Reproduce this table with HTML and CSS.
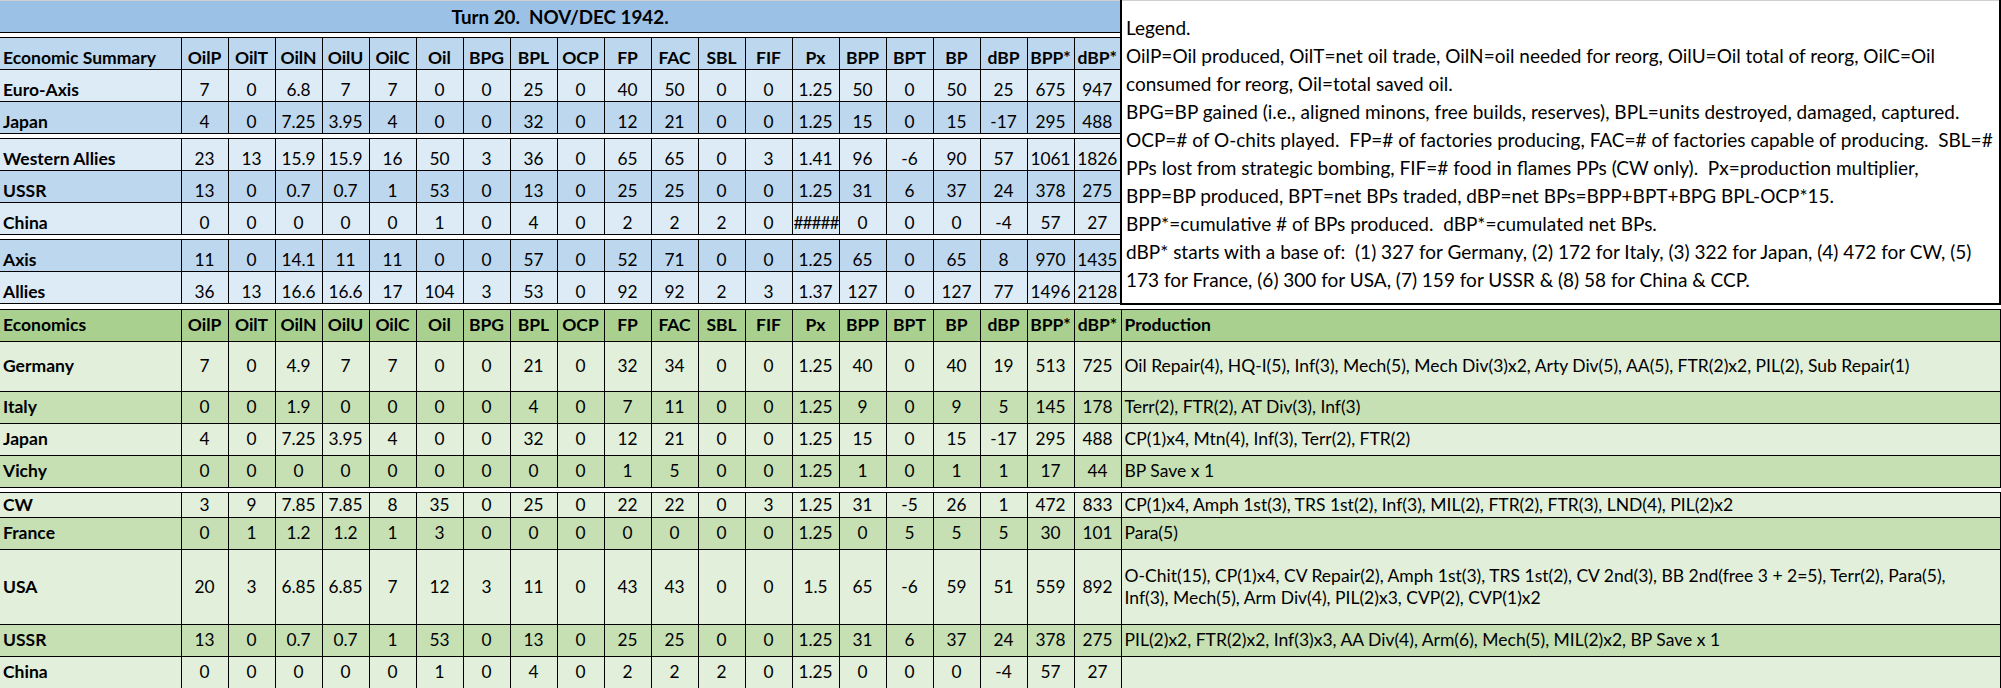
FILE: index.html
```html
<!DOCTYPE html>
<html>
<head>
<meta charset="utf-8">
<link rel="stylesheet" href="styles.css">
</head>
<body>
<table class="sheet">
<colgroup>
<col class="c-name">
<col class="c-num"><col class="c-num"><col class="c-num"><col class="c-num"><col class="c-num">
<col class="c-num"><col class="c-num"><col class="c-num"><col class="c-num"><col class="c-num">
<col class="c-num"><col class="c-num"><col class="c-num"><col class="c-num"><col class="c-num">
<col class="c-num"><col class="c-num"><col class="c-num"><col class="c-num"><col class="c-num">
<col class="c-prod">
</colgroup>
<tbody>
<tr class="r-title"><td colspan="21" class="title">Turn 20.&nbsp; NOV/DEC 1942.</td>
<td rowspan="12" class="legend">
<div class="legend-lines">
<div>Legend.</div>
<div>OilP=Oil produced, OilT=net oil trade, OilN=oil needed for reorg, OilU=Oil total of reorg, OilC=Oil</div>
<div>consumed for reorg, Oil=total saved oil.</div>
<div>BPG=BP gained (i.e., aligned minons, free builds, reserves), BPL=units destroyed, damaged, captured.</div>
<div>OCP=# of O-chits played.&nbsp; FP=# of factories producing, FAC=# of factories capable of producing.&nbsp; SBL=#</div>
<div>PPs lost from strategic bombing, FIF=# food in flames PPs (CW only).&nbsp; Px=production multiplier,</div>
<div>BPP=BP produced, BPT=net BPs traded, dBP=net BPs=BPP+BPT+BPG BPL-OCP*15.</div>
<div>BPP*=cumulative # of BPs produced.&nbsp; dBP*=cumulated net BPs.</div>
<div>dBP* starts with a base of:&nbsp; (1) 327 for Germany, (2) 172 for Italy, (3) 322 for Japan, (4) 472 for CW, (5)</div>
<div>173 for France, (6) 300 for USA, (7) 159 for USSR &amp; (8) 58 for China &amp; CCP.</div>
</div>
</td></tr>
<tr class="gap"><td colspan="21"></td></tr>
<tr class="r-std sum b-dark hdr"><td class="name">Economic Summary</td><td>OilP</td><td>OilT</td><td>OilN</td><td>OilU</td><td>OilC</td><td>Oil</td><td>BPG</td><td>BPL</td><td>OCP</td><td>FP</td><td>FAC</td><td>SBL</td><td>FIF</td><td>Px</td><td>BPP</td><td>BPT</td><td>BP</td><td>dBP</td><td>BPP*</td><td>dBP*</td></tr>
<tr class="r-std sum b-light"><td class="name">Euro-Axis</td><td>7</td><td>0</td><td>6.8</td><td>7</td><td>7</td><td>0</td><td>0</td><td>25</td><td>0</td><td>40</td><td>50</td><td>0</td><td>0</td><td>1.25</td><td>50</td><td>0</td><td>50</td><td>25</td><td>675</td><td>947</td></tr>
<tr class="r-std sum b-dark"><td class="name">Japan</td><td>4</td><td>0</td><td>7.25</td><td>3.95</td><td>4</td><td>0</td><td>0</td><td>32</td><td>0</td><td>12</td><td>21</td><td>0</td><td>0</td><td>1.25</td><td>15</td><td>0</td><td>15</td><td>-17</td><td>295</td><td>488</td></tr>
<tr class="gap"><td colspan="21"></td></tr>
<tr class="r-std sum b-light"><td class="name">Western Allies</td><td>23</td><td>13</td><td>15.9</td><td>15.9</td><td>16</td><td>50</td><td>3</td><td>36</td><td>0</td><td>65</td><td>65</td><td>0</td><td>3</td><td>1.41</td><td>96</td><td>-6</td><td>90</td><td>57</td><td>1061</td><td>1826</td></tr>
<tr class="r-std sum b-dark"><td class="name">USSR</td><td>13</td><td>0</td><td>0.7</td><td>0.7</td><td>1</td><td>53</td><td>0</td><td>13</td><td>0</td><td>25</td><td>25</td><td>0</td><td>0</td><td>1.25</td><td>31</td><td>6</td><td>37</td><td>24</td><td>378</td><td>275</td></tr>
<tr class="r-std sum b-light"><td class="name">China</td><td>0</td><td>0</td><td>0</td><td>0</td><td>0</td><td>1</td><td>0</td><td>4</td><td>0</td><td>2</td><td>2</td><td>2</td><td>0</td><td class="hash">#####</td><td>0</td><td>0</td><td>0</td><td>-4</td><td>57</td><td>27</td></tr>
<tr class="gap"><td colspan="21"></td></tr>
<tr class="r-std sum b-dark"><td class="name">Axis</td><td>11</td><td>0</td><td>14.1</td><td>11</td><td>11</td><td>0</td><td>0</td><td>57</td><td>0</td><td>52</td><td>71</td><td>0</td><td>0</td><td>1.25</td><td>65</td><td>0</td><td>65</td><td>8</td><td>970</td><td>1435</td></tr>
<tr class="r-std sum b-light"><td class="name">Allies</td><td>36</td><td>13</td><td>16.6</td><td>16.6</td><td>17</td><td>104</td><td>3</td><td>53</td><td>0</td><td>92</td><td>92</td><td>2</td><td>3</td><td>1.37</td><td>127</td><td>0</td><td>127</td><td>77</td><td>1496</td><td>2128</td></tr>
<tr class="gap"><td colspan="22"></td></tr>
<tr class="r-std g-head hdr"><td class="name">Economics</td><td>OilP</td><td>OilT</td><td>OilN</td><td>OilU</td><td>OilC</td><td>Oil</td><td>BPG</td><td>BPL</td><td>OCP</td><td>FP</td><td>FAC</td><td>SBL</td><td>FIF</td><td>Px</td><td>BPP</td><td>BPT</td><td>BP</td><td>dBP</td><td>BPP*</td><td>dBP*</td><td class="prod">Production</td></tr>
<tr class="r-tall g-light"><td class="name">Germany</td><td>7</td><td>0</td><td>4.9</td><td>7</td><td>7</td><td>0</td><td>0</td><td>21</td><td>0</td><td>32</td><td>34</td><td>0</td><td>0</td><td>1.25</td><td>40</td><td>0</td><td>40</td><td>19</td><td>513</td><td>725</td><td class="prod">Oil Repair(4), HQ-I(5), Inf(3), Mech(5), Mech Div(3)x2, Arty Div(5), AA(5), FTR(2)x2, PIL(2), Sub Repair(1)</td></tr>
<tr class="r-std g-dark"><td class="name">Italy</td><td>0</td><td>0</td><td>1.9</td><td>0</td><td>0</td><td>0</td><td>0</td><td>4</td><td>0</td><td>7</td><td>11</td><td>0</td><td>0</td><td>1.25</td><td>9</td><td>0</td><td>9</td><td>5</td><td>145</td><td>178</td><td class="prod">Terr(2), FTR(2), AT Div(3), Inf(3)</td></tr>
<tr class="r-std g-light"><td class="name">Japan</td><td>4</td><td>0</td><td>7.25</td><td>3.95</td><td>4</td><td>0</td><td>0</td><td>32</td><td>0</td><td>12</td><td>21</td><td>0</td><td>0</td><td>1.25</td><td>15</td><td>0</td><td>15</td><td>-17</td><td>295</td><td>488</td><td class="prod">CP(1)x4, Mtn(4), Inf(3), Terr(2), FTR(2)</td></tr>
<tr class="r-std g-dark"><td class="name">Vichy</td><td>0</td><td>0</td><td>0</td><td>0</td><td>0</td><td>0</td><td>0</td><td>0</td><td>0</td><td>1</td><td>5</td><td>0</td><td>0</td><td>1.25</td><td>1</td><td>0</td><td>1</td><td>1</td><td>17</td><td>44</td><td class="prod">BP Save x 1</td></tr>
<tr class="gap"><td colspan="22"></td></tr>
<tr class="r-short g-light"><td class="name">CW</td><td>3</td><td>9</td><td>7.85</td><td>7.85</td><td>8</td><td>35</td><td>0</td><td>25</td><td>0</td><td>22</td><td>22</td><td>0</td><td>3</td><td>1.25</td><td>31</td><td>-5</td><td>26</td><td>1</td><td>472</td><td>833</td><td class="prod">CP(1)x4, Amph 1st(3), TRS 1st(2), Inf(3), MIL(2), FTR(2), FTR(3), LND(4), PIL(2)x2</td></tr>
<tr class="r-std g-dark"><td class="name">France</td><td>0</td><td>1</td><td>1.2</td><td>1.2</td><td>1</td><td>3</td><td>0</td><td>0</td><td>0</td><td>0</td><td>0</td><td>0</td><td>0</td><td>1.25</td><td>0</td><td>5</td><td>5</td><td>5</td><td>30</td><td>101</td><td class="prod">Para(5)</td></tr>
<tr class="r-usa g-light"><td class="name">USA</td><td>20</td><td>3</td><td>6.85</td><td>6.85</td><td>7</td><td>12</td><td>3</td><td>11</td><td>0</td><td>43</td><td>43</td><td>0</td><td>0</td><td>1.5</td><td>65</td><td>-6</td><td>59</td><td>51</td><td>559</td><td>892</td><td class="prod">O-Chit(15), CP(1)x4, CV Repair(2), Amph 1st(3), TRS 1st(2), CV 2nd(3), BB 2nd(free 3 + 2=5), Terr(2), Para(5),<br>Inf(3), Mech(5), Arm Div(4), PIL(2)x3, CVP(2), CVP(1)x2</td></tr>
<tr class="r-std g-dark"><td class="name">USSR</td><td>13</td><td>0</td><td>0.7</td><td>0.7</td><td>1</td><td>53</td><td>0</td><td>13</td><td>0</td><td>25</td><td>25</td><td>0</td><td>0</td><td>1.25</td><td>31</td><td>6</td><td>37</td><td>24</td><td>378</td><td>275</td><td class="prod">PIL(2)x2, FTR(2)x2, Inf(3)x3, AA Div(4), Arm(6), Mech(5), MIL(2)x2, BP Save x 1</td></tr>
<tr class="r-std g-light"><td class="name">China</td><td>0</td><td>0</td><td>0</td><td>0</td><td>0</td><td>1</td><td>0</td><td>4</td><td>0</td><td>2</td><td>2</td><td>2</td><td>0</td><td>1.25</td><td>0</td><td>0</td><td>0</td><td>-4</td><td>57</td><td>27</td><td class="prod"></td></tr>
</tbody>
</table>
</body>
</html>
```

FILE: styles.css
```css
html, body {
  margin: 0;
  padding: 0;
  background: #ffffff;
}

body {
  font-family: Lato, "Liberation Sans", sans-serif;
  font-size: 17.3px;
  color: #000;
}

.sheet {
  border-collapse: collapse;
  table-layout: fixed;
  width: 2000px;
  border-top: 1px solid #d0d0d0;
}

.c-name { width: 181px; }
.c-num { width: 47px; }
.c-prod { width: 879px; }

.sheet td {
  border: 1px solid #000;
  padding: 0 1px;
  text-align: center;
  vertical-align: middle;
  white-space: nowrap;
  overflow: hidden;
  line-height: 22px;
}

.sheet td.name {
  text-align: left;
  font-weight: 700;
  font-size: 17.5px;
  border-left: none;
  padding-left: 3px;
}

.sheet td.prod {
  text-align: left;
  font-size: 17.5px;
  padding-left: 3px;
}

.hdr td {
  font-weight: 700;
  font-size: 17.5px;
}

.sum td {
  vertical-align: bottom;
}

.sheet td.title {
  background: #9bc2e6;
  font-weight: 700;
  font-size: 18.8px;
  border-top: none;
  border-left: none;
  text-align: center;
}

.r-title td { height: 31px; }

.gap td {
  height: 4px;
  padding: 0;
  background: #fff;
  line-height: 0;
  border-left: none;
  border-right: none;
}

.r-std td { height: 31px; }
.r-tall td { height: 49px; }
.r-short td { height: 24px; }
.r-usa td { height: 74px; }

.b-dark td { background: #bdd7ee; }
.b-light td { background: #ddebf7; }
.g-head td { background: #a9d08e; }
.g-dark td { background: #c6e0b4; }
.g-light td { background: #e2efda; }

.sheet td.hash { letter-spacing: -1px; }

.sheet td.legend {
  background: #fff;
  border-left: 2px solid #000;
  border-right: 2px solid #000;
  border-bottom: 2px solid #000;
  border-top: none;
  vertical-align: top;
  text-align: left;
  padding: 13px 0 0 4px;
  font-size: 19px;
}

.legend-lines div {
  line-height: 28px;
  white-space: nowrap;
}
```
